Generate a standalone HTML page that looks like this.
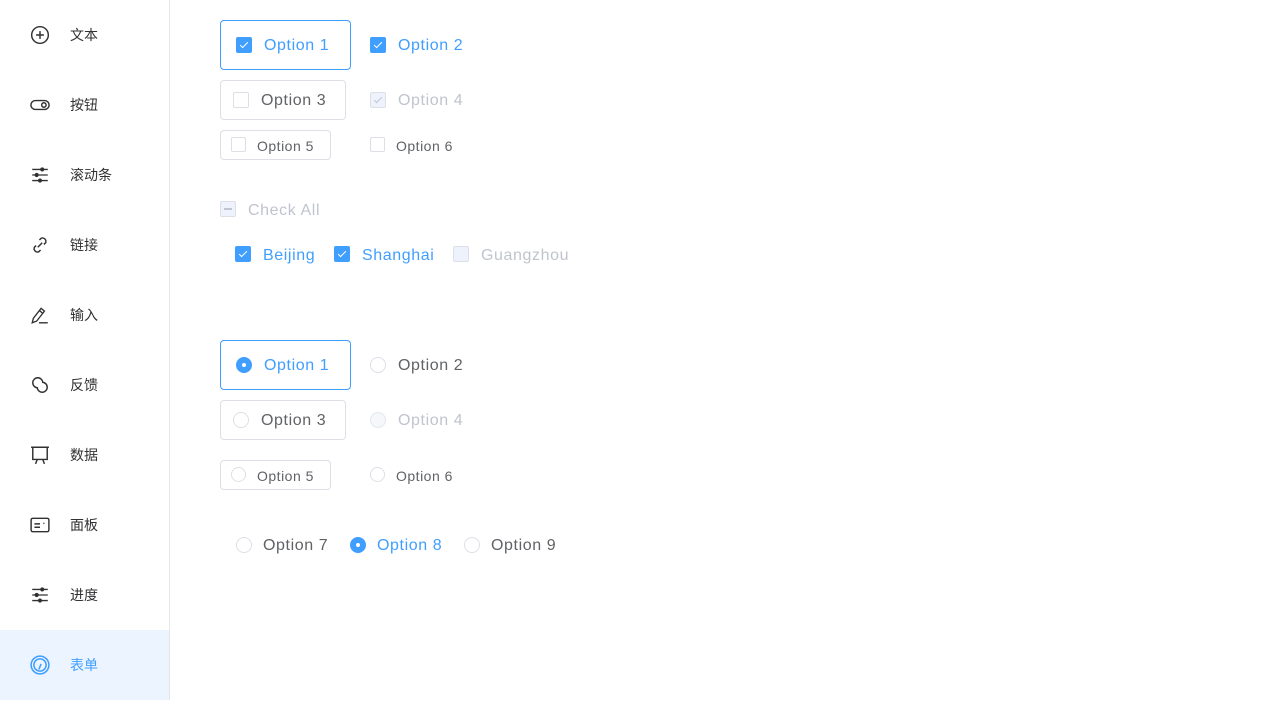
<!DOCTYPE html>
<html><head><meta charset="utf-8"><style>
*{box-sizing:border-box;margin:0;padding:0}
body{width:1280px;height:715px;background:#fff;position:relative;overflow:hidden;font-family:"Liberation Sans","Noto Sans CJK SC",sans-serif;}
.side{position:absolute;left:0;top:0;width:170px;height:700px;border-right:1px solid #e6e6e6;}
.it{position:absolute;left:0;width:169px;height:70px;}
.it svg{position:absolute;left:30px;top:25px;width:20px;height:20px}
.it span{position:absolute;left:70px;top:0;line-height:70px;font-size:14px;color:#303133}
.it.act{background:#ecf5ff}.it.act span{color:#409eff}
.bx{position:absolute;border:1px solid #dcdfe6;border-radius:4px}
.bx.on{border-color:#409eff}
.cb{position:absolute;width:16px;height:16px;border:1px solid #dcdfe6;border-radius:2px;background:#fff}
.cb.on{background:#409eff;border-color:#409eff}
.cb.on:after{content:"";position:absolute;left:5px;top:2px;width:3px;height:7px;border:solid #fff;border-width:0 1.5px 1.5px 0;transform:rotate(45deg)}
.cb.dis{background:#edf2fc}
.cb.dis.chk:after{content:"";position:absolute;left:5px;top:2px;width:3px;height:7px;border:solid #c0c4cc;border-width:0 1.5px 1.5px 0;transform:rotate(45deg)}
.cb.ind{background:#edf2fc}
.cb.ind:after{content:"";position:absolute;left:3px;top:6px;width:8px;height:2px;background:#c0c4cc}
.rd{position:absolute;width:16px;height:16px;border:1px solid #dcdfe6;border-radius:50%;background:#fff}
.rd.on{background:#409eff;border-color:#409eff}
.rd.on:after{content:"";position:absolute;left:5px;top:5px;width:4px;height:4px;border-radius:50%;background:#fff}
.rd.dis{background:#f5f7fa;border-color:#e4e7ed}
.t{position:absolute;font-size:16px;color:#606266;line-height:20px;white-space:nowrap;letter-spacing:0.6px}
.t.s{font-size:14px;letter-spacing:0.5px}
.t.b{color:#409eff}.t.g{color:#c0c4cc}
</style></head><body>
<div class="side">
<div class="it" style="top:0"><svg viewBox="0 0 18 18" fill="none" stroke="#303133" stroke-width="1.3"><circle cx="9" cy="9" r="7.5"/><path d="M9 5.5v7M5.5 9h7"/></svg><span>文本</span></div>
<div class="it" style="top:70px"><svg viewBox="0 0 18 18" fill="none" stroke="#303133" stroke-width="1.3"><rect x="0.8" y="5" width="16.4" height="8" rx="4"/><circle cx="12.5" cy="9" r="2"/></svg><span>按钮</span></div>
<div class="it" style="top:140px"><svg viewBox="0 0 18 18" fill="#303133" stroke="#303133" stroke-width="1.2"><path d="M2 4h14M2 9h14M2 14h14"/><circle cx="11" cy="4" r="1.3"/><circle cx="6" cy="9" r="1.3"/><circle cx="9" cy="14" r="1.3"/></svg><span>滚动条</span></div>
<div class="it" style="top:210px"><svg viewBox="0 0 18 18" fill="none" stroke="#303133" stroke-width="1.3"><path d="M7 11l4-4M8.5 4.5l1.5-1.5a3 3 0 014 4l-1.5 1.5M9.5 13.5l-1.5 1.5a3 3 0 01-4-4l1.5-1.5"/></svg><span>链接</span></div>
<div class="it" style="top:280px"><svg viewBox="0 0 18 18" fill="none" stroke="#303133" stroke-width="1.2"><path d="M2 16l1-4 7-9 3 2.5-7 9z M8.5 5l3 2.5M8 16h8"/></svg><span>输入</span></div>
<div class="it" style="top:350px"><svg viewBox="0 0 18 18" fill="none" stroke="#303133" stroke-width="1.3"><path d="M7 11.5A4.5 4.5 0 1 1 11.5 7M11 6.5A4.5 4.5 0 1 1 6.5 11"/></svg><span>反馈</span></div>
<div class="it" style="top:420px"><svg viewBox="0 0 18 18" fill="none" stroke="#303133" stroke-width="1.3"><path d="M1 2h16M2.5 2v11h13V2M5 17l1.5-4M13 17l-1.5-4"/></svg><span>数据</span></div>
<div class="it" style="top:490px"><svg viewBox="0 0 18 18" fill="none" stroke="#303133" stroke-width="1.3"><rect x="1" y="3" width="16" height="12" rx="1.5"/><path d="M4 8h5M4 11h5M12 7.5h1"/></svg><span>面板</span></div>
<div class="it" style="top:560px"><svg viewBox="0 0 18 18" fill="#303133" stroke="#303133" stroke-width="1.2"><path d="M2 4h14M2 9h14M2 14h14"/><circle cx="11" cy="4" r="1.3"/><circle cx="6" cy="9" r="1.3"/><circle cx="9" cy="14" r="1.3"/></svg><span>进度</span></div>
<div class="it act" style="top:630px"><svg viewBox="0 0 18 18" fill="none" stroke="#409eff" stroke-width="1.4"><circle cx="9" cy="9" r="8"/><circle cx="9" cy="9" r="5.5"/><path d="M8 13l2-5"/></svg><span>表单</span></div>
</div>

<div class="bx on" style="left:220px;top:20px;width:131px;height:50px"></div>
<div class="cb on" style="left:236px;top:37px"></div><div class="t b" style="left:264px;top:36px">Option 1</div>
<div class="cb on" style="left:370px;top:37px"></div><div class="t b" style="left:398px;top:36px">Option 2</div>
<div class="bx" style="left:220px;top:80px;width:126px;height:40px"></div>
<div class="cb" style="left:233px;top:92px"></div><div class="t" style="left:261px;top:91px">Option 3</div>
<div class="cb dis chk" style="left:370px;top:92px"></div><div class="t g" style="left:398px;top:91px">Option 4</div>
<div class="bx" style="left:220px;top:130px;width:111px;height:30px"></div>
<div class="cb" style="left:231px;top:137px;width:15px;height:15px"></div><div class="t s" style="left:257px;top:136px">Option 5</div>
<div class="cb" style="left:370px;top:137px;width:15px;height:15px"></div><div class="t s" style="left:396px;top:136px">Option 6</div>
<div class="cb ind" style="left:220px;top:201px"></div><div class="t g" style="left:248px;top:201px">Check All</div>
<div class="cb on" style="left:235px;top:246px"></div><div class="t b" style="left:263px;top:246px">Beijing</div>
<div class="cb on" style="left:334px;top:246px"></div><div class="t b" style="left:362px;top:246px">Shanghai</div>
<div class="cb dis" style="left:453px;top:246px"></div><div class="t g" style="left:481px;top:246px">Guangzhou</div>

<div class="bx on" style="left:220px;top:340px;width:131px;height:50px"></div>
<div class="rd on" style="left:236px;top:357px"></div><div class="t b" style="left:264px;top:356px">Option 1</div>
<div class="rd" style="left:370px;top:357px"></div><div class="t" style="left:398px;top:356px">Option 2</div>
<div class="bx" style="left:220px;top:400px;width:126px;height:40px"></div>
<div class="rd" style="left:233px;top:412px"></div><div class="t" style="left:261px;top:411px">Option 3</div>
<div class="rd dis" style="left:370px;top:412px"></div><div class="t g" style="left:398px;top:411px">Option 4</div>
<div class="bx" style="left:220px;top:460px;width:111px;height:30px"></div>
<div class="rd" style="left:231px;top:467px;width:15px;height:15px"></div><div class="t s" style="left:257px;top:466px">Option 5</div>
<div class="rd" style="left:370px;top:467px;width:15px;height:15px"></div><div class="t s" style="left:396px;top:466px">Option 6</div>
<div class="rd" style="left:236px;top:537px"></div><div class="t" style="left:263px;top:536px">Option 7</div>
<div class="rd on" style="left:350px;top:537px"></div><div class="t b" style="left:377px;top:536px">Option 8</div>
<div class="rd" style="left:464px;top:537px"></div><div class="t" style="left:491px;top:536px">Option 9</div>
</body></html>
